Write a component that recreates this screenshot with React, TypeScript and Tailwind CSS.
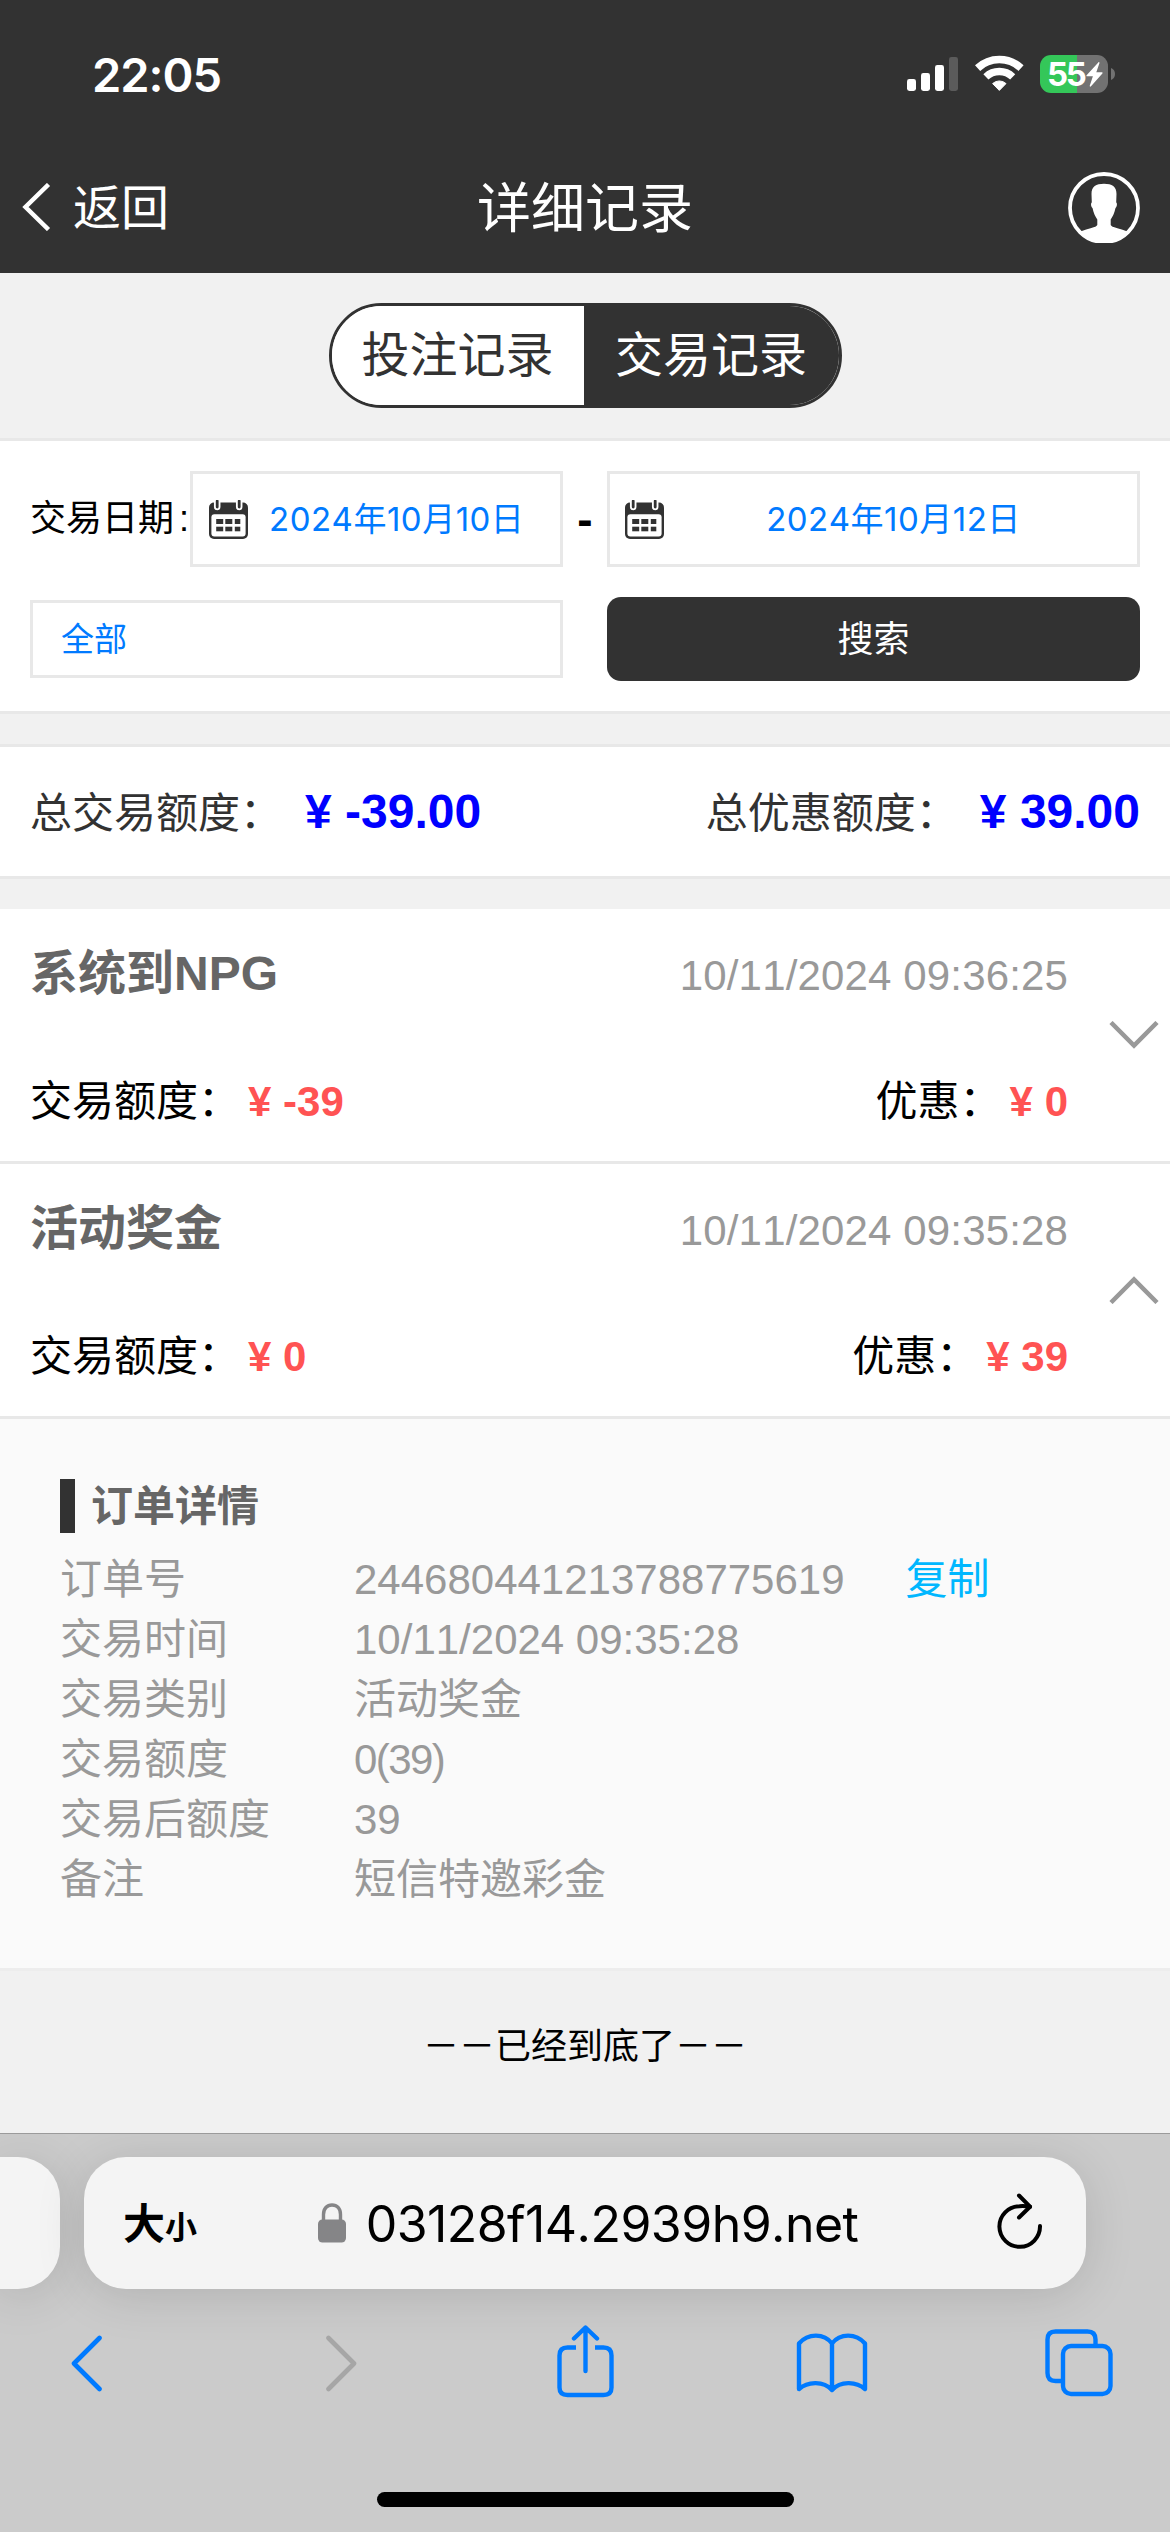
import React, { useState } from 'react';

interface OrderDetail {
  label: string;
  value: string;
  copyable?: boolean;
  tight?: boolean;
}

interface TradeRecord {
  id: string;
  title: string;
  time: string;
  amount: string;
  bonus: string;
  details: OrderDetail[];
}

const records: TradeRecord[] = [
  {
    id: '1',
    title: '系统到NPG',
    time: '10/11/2024 09:36:25',
    amount: '-39',
    bonus: '0',
    details: []
  },
  {
    id: '2',
    title: '活动奖金',
    time: '10/11/2024 09:35:28',
    amount: '0',
    bonus: '39',
    details: [
      { label: '订单号', value: '244680441213788775619', copyable: true },
      { label: '交易时间', value: '10/11/2024 09:35:28' },
      { label: '交易类别', value: '活动奖金' },
      { label: '交易额度', value: '0(39)', tight: true },
      { label: '交易后额度', value: '39' },
      { label: '备注', value: '短信特邀彩金' }
    ]
  }
];

const SignalIcon = () => (
  <svg width="51" height="34" viewBox="0 0 51 34" fill="#fff">
    <rect x="0" y="22" width="9" height="12" rx="2.4" />
    <rect x="14" y="16" width="9" height="18" rx="2.4" />
    <rect x="28" y="8" width="9" height="26" rx="2.4" />
    <rect x="42" y="0" width="9" height="34" rx="2.4" fill="#5b5b5b" />
  </svg>
);

const WifiIcon = () => (
  <svg width="49" height="36" viewBox="0 0 49 36" fill="none" stroke="#fff">
    <path d="M2.6 13.1A31.8 31.8 0 0 1 46 13.1" strokeWidth="7.6" />
    <path d="M10.9 21.9A19.5 19.5 0 0 1 37.7 21.9" strokeWidth="7.4" />
    <path d="M24.3 35.4L17.6 28.6A9.8 9.8 0 0 1 31 28.6Z" fill="#fff" strokeWidth="1" strokeLinejoin="round" />
  </svg>
);

const BatteryIcon = () => (
  <div className="flex items-center">
    <div className="flex h-[38px] w-[68px] items-center overflow-hidden rounded-[11px] bg-[linear-gradient(90deg,#34c759_37px,#727272_37px)] pl-[7px]">
      <span className="font-['Inter',sans-serif] text-[33px] leading-[38px] font-bold tracking-[-2.4px] text-white">55</span>
      <svg className="ml-[2px]" width="17" height="25" viewBox="0 0 17 25" fill="#fff">
        <path d="M12.3 .4L.6 13.2c-.4.6-.2 1.1.5 1.1h5.8L3.8 23.6c-.3 1 .6 1.4 1.2.7L16.4 11.4c.5-.6.2-1.1-.5-1.1h-5.6L13.4 1.2c.3-1-.5-1.4-1.1-.8z" />
      </svg>
    </div>
    <svg className="ml-[3px]" width="4" height="12" viewBox="0 0 4 12" fill="#727272">
      <path d="M0 0c2.600 1 4 3.200 4 6s-1.400 5-4 6z" />
    </svg>
  </div>
);

const AvatarIcon = () => (
  <svg className="mr-[8px]" width="72" height="71" viewBox="0 0 72 71">
    <circle cx="36" cy="36" r="34" fill="none" stroke="#fff" strokeWidth="3.800" />
    <path
      d="M36 11.700C44 11.700 48.600 14.500 48.500 22L48.200 30.500C49.500 31 49 35 47.500 36C46.500 41 44.500 45 42.700 47.500V53C43.500 55.500 52 56.500 59.500 59.500C54 67 46 71 36 71C26 71 18 67 12.500 59.500C20 56.500 28.500 55.500 29.300 53V47.500C27.500 45 25.500 41 24.500 36C23 35 22.500 31 23.800 30.500L23.500 22C23.400 14.500 28 11.700 36 11.700Z"
      fill="#fff"
    />
  </svg>
);

const CalendarIcon = () => (
  <svg className="shrink-0" width="39" height="39" viewBox="0 0 39 39">
    <rect x="0" y="2.500" width="39" height="36.500" rx="5" fill="#323232" />
    <rect x="2.400" y="14.300" width="34.200" height="22.300" rx="3" fill="#fff" />
    <path d="M8.200 0v7M30.200 0v7" stroke="#fff" strokeWidth="6.500" strokeLinecap="round" />
    <path d="M8.200 1v6M30.200 1v6" stroke="#323232" strokeWidth="2.800" strokeLinecap="round" />
    <g fill="#323232">
      <rect x="7.200" y="19" width="7" height="5" />
      <rect x="16.300" y="19" width="7" height="5" />
      <rect x="25.800" y="19" width="5.500" height="5" />
      <rect x="7.200" y="26.700" width="7" height="4.600" />
      <rect x="16.300" y="26.700" width="7" height="4.600" />
      <rect x="25.800" y="26.700" width="5.500" height="4.600" />
    </g>
  </svg>
);

const Header: React.FC = () => (
  <header className="bg-[#323232] text-white">
    <div className="flex h-[141px] items-start justify-between pr-[55px] pl-[92px]">
      <span className="mt-[50px] font-['Inter',sans-serif] text-[47px] leading-[50px] font-semibold tracking-[-1px]">22:05</span>
      <div className="mt-[55px] flex items-start">
        <div className="mt-[2px]">
          <SignalIcon />
        </div>
        <div className="ml-[17px]">
          <WifiIcon />
        </div>
        <div className="ml-[16px]">
          <BatteryIcon />
        </div>
      </div>
    </div>
    <div className="grid h-[132px] grid-cols-[1fr_auto_1fr] items-center px-[22px]">
      <button className="flex items-center">
        <svg width="29" height="48" viewBox="0 0 29 48" fill="none" stroke="#fff" strokeWidth="4.500">
          <path d="M26.500 1.500L3.500 24L26.500 46.500" />
        </svg>
        <span className="ml-[22px] pt-[3px] text-[48px] leading-[60px]">返回</span>
      </button>
      <h1 className="pt-[3px] text-[54px] leading-[64px]">详细记录</h1>
      <div className="flex justify-end">
        <AvatarIcon />
      </div>
    </div>
  </header>
);

const RecordTabs: React.FC = () => (
  <div className="flex h-[168px] justify-center border-b-[3px] border-[#e8e8e8] bg-[#f1f1f1] pt-[30px]">
    <div className="flex h-[105px] w-[513px] overflow-hidden rounded-full border-[3px] border-[#323232] text-[48px] leading-[100px]">
      <button className="w-[252px] bg-white text-[#323232]">投注记录</button>
      <button className="flex-1 bg-[#323232] text-white">交易记录</button>
    </div>
  </div>
);

const SearchForm: React.FC = () => (
  <section className="h-[273px] border-b-[3px] border-[#e8e8e8] bg-white px-[30px] pt-[30px]">
    <div className="flex h-[96px] items-center">
      <label className="w-[160px] text-[36px] whitespace-nowrap text-black">
        交易日期<span className="ml-[5px]">:</span>
      </label>
      <div className="flex h-full w-[373px] items-center border-[3px] border-[#e8e8e8] pl-[16px]">
        <CalendarIcon />
        <span className="ml-[21px] pt-[2px] font-['Inter','Noto_Sans_CJK_SC',sans-serif] text-[33px] tracking-[0.5px] whitespace-nowrap text-[#007aff]">
          2024年10月10日
        </span>
      </div>
      <span className="w-[44px] text-center text-[46px] leading-[60px] font-bold text-black">-</span>
      <div className="flex h-full w-[533px] items-center border-[3px] border-[#e8e8e8] pr-[14px] pl-[15px]">
        <CalendarIcon />
        <span className="flex-1 pt-[2px] text-center font-['Inter','Noto_Sans_CJK_SC',sans-serif] text-[33px] tracking-[0.5px] whitespace-nowrap text-[#007aff]">
          2024年10月12日
        </span>
      </div>
    </div>
    <div className="mt-[30px] flex h-[84px] items-center justify-between">
      <div className="flex h-[78px] w-[533px] items-center border-[3px] border-[#e8e8e8] pt-[2px] pl-[28px] text-[33px] text-[#007aff]">
        全部
      </div>
      <button className="h-full w-[533px] rounded-[14px] bg-[#323232] pt-[2px] text-[36px] text-white">搜索</button>
    </div>
  </section>
);

const Summary: React.FC = () => (
  <section className="mt-[30px] flex h-[135px] items-baseline justify-between border-y-[3px] border-[#e8e8e8] bg-white px-[30px] leading-[130px]">
    <div className="flex items-baseline">
      <span className="text-[42px] text-[#323232]">总交易额度：</span>
      <span className="ml-[23px] text-[48px] font-bold text-[#0000ff]">¥ -39.00</span>
    </div>
    <div className="flex items-baseline">
      <span className="text-[42px] text-[#323232]">总优惠额度：</span>
      <span className="ml-[22px] text-[48px] font-bold text-[#0000ff]">¥ 39.00</span>
    </div>
  </section>
);

const OrderDetails: React.FC<{ details: OrderDetail[] }> = ({ details }) => (
  <div className="border-b-[3px] border-[#ededed] bg-[#fafafa] px-[60px] pt-[60px] pb-[58px]">
    <h3 className="h-[54px] border-l-[15px] border-[#323232] pl-[16px] text-[42px] leading-[56px] font-bold text-[#666]">
      订单详情
    </h3>
    <div className="mt-[17px]">
      {details.map((item) => (
        <div key={item.label} className="flex text-[42px] leading-[60px] text-[#999]">
          <span className="w-[294px]">{item.label}</span>
          <span className={item.tight ? 'tracking-[-1.6px]' : ''}>{item.value}</span>
          {item.copyable && <button className="ml-[61px] text-[#00b7ff]">复制</button>}
        </div>
      ))}
    </div>
  </div>
);

const RecordItem: React.FC<{ record: TradeRecord; open: boolean; onToggle: () => void }> = ({
  record,
  open,
  onToggle
}) => (
  <>
    <div
      className="flex h-[255px] border-b-[3px] border-[#e8e8e8] bg-white pr-[11px] pl-[30px]"
      onClick={onToggle}
    >
      <div className="flex-1 pt-[29px]">
        <div className="flex h-[72px] items-baseline justify-between leading-[72px]">
          <h2 className="text-[48px] font-bold text-[#666]">{record.title}</h2>
          <span className="text-[42px] tracking-[0.15px] text-[#999]">{record.time}</span>
        </div>
        <div className="mt-[62px] flex justify-between text-[42px] leading-[60px] text-black">
          <div>
            交易额度：<span className="ml-[8px] font-bold text-[#ff5353]">¥ {record.amount}</span>
          </div>
          <div>
            优惠：<span className="ml-[8px] font-bold text-[#ff5353]">¥ {record.bonus}</span>
          </div>
        </div>
      </div>
      <svg
        className={open ? 'mt-[112px] ml-[41px] rotate-180' : 'mt-[112px] ml-[41px]'}
        width="50"
        height="28"
        viewBox="0 0 50 28"
        fill="none"
        stroke="#999"
        strokeWidth="4.500"
      >
        <path d="M2 1.500L25 24.500L48 1.500" />
      </svg>
    </div>
    {open && <OrderDetails details={record.details} />}
  </>
);

const BrowserBar: React.FC = () => (
  <footer className="h-[399px] overflow-hidden border-t border-[#9b9b9b] bg-[#cbcbcb] pt-[23px]">
    <div className="flex h-[132px] gap-[24px]">
      <div className="w-[60px] rounded-r-[42px] bg-[#f4f4f4] shadow-[0_6px_50px_rgba(0,0,0,0.13)]" />
      <div className="flex w-[1002px] items-center rounded-[42px] bg-[#f4f4f4] pr-[43px] pl-[39px] text-black shadow-[0_6px_50px_rgba(0,0,0,0.13)]">
        <div className="flex items-baseline pt-[2px] font-bold">
          <span className="text-[42px]">大</span>
          <span className="text-[32px]">小</span>
        </div>
        <div className="flex flex-1 items-center justify-center pr-[18px]">
          <svg width="28" height="40" viewBox="0 0 28 40">
            <path d="M5.500 18V11.500C5.500 5.500 9 2 14 2S22.500 5.500 22.500 11.500V18" fill="none" stroke="#858587" strokeWidth="3.400" />
            <rect x="0" y="16.500" width="28" height="23" rx="4.500" fill="#858587" />
          </svg>
          <span className="ml-[20px] pt-[2px] font-['Inter',sans-serif] text-[50px] leading-[60px] tracking-[-0.55px]">
            03128f14.2939h9.net
          </span>
        </div>
        <svg className="mb-[4px]" width="46" height="56" viewBox="0 0 46 56" fill="none" stroke="#000" strokeWidth="4" strokeLinecap="round" strokeLinejoin="round">
          <path d="M43 33A20.300 20.300 0 1 1 22.500 13.200C26.500 12.800 30 13.200 33 13.800" />
          <path d="M22 2.500L33 13.700L22 24.500" />
        </svg>
      </div>
    </div>
    {/* Toolbar */}
    <div className="mt-[34px] flex h-[80px] items-center text-[#007aff]">
      <svg className="ml-[70px]" width="33" height="57" viewBox="0 0 33 57" fill="none" stroke="currentColor" strokeWidth="4.600" strokeLinecap="round" strokeLinejoin="round">
        <path d="M29.500 3L4 28.500L29.500 54" />
      </svg>
      <svg className="ml-[222px]" width="33" height="57" viewBox="0 0 33 57" fill="none" stroke="#a6a6a6" strokeWidth="4.600" strokeLinecap="round" strokeLinejoin="round">
        <path d="M3.500 3L29 28.500L3.500 54" />
      </svg>
      <svg className="mb-[4px] ml-[199px]" width="57" height="73" viewBox="0 0 57 73" fill="none" stroke="currentColor" strokeWidth="4.400">
        <path d="M19 22.500H10.500Q2.500 22.500 2.500 30.500V62.500Q2.500 70 10.500 70H46.500Q54.500 70 54.500 62.500V30.500Q54.500 22.500 46.500 22.500H38" />
        <path d="M28.500 46V3M17 13.500L28.500 2.500L40 13.500" strokeLinecap="round" strokeLinejoin="round" />
      </svg>
      <svg className="ml-[182px]" width="72" height="60" viewBox="0 0 72 60" fill="none" stroke="currentColor" strokeWidth="4.400" strokeLinecap="round" strokeLinejoin="round">
        <path d="M36 10.500C28 0 12 0 3 10.500V56C11 49 27 47 36 57C45 47 61 49 69 56V10.500C60 0 44 0 36 10.500V57" />
      </svg>
      <svg className="ml-[177px]" width="68" height="68" viewBox="0 0 68 68" fill="none" stroke="currentColor" strokeWidth="4.400">
        <path d="M17 52H10.500Q2.500 52 2.500 44V10.500Q2.500 2.500 10.500 2.500H42.500Q50.500 2.500 50.500 10.500V17" />
        <rect x="18" y="17" width="47.500" height="48" rx="8" />
      </svg>
    </div>
    <div className="mx-auto mt-[89px] h-[15px] w-[417px] rounded-full bg-black" />
  </footer>
);

const App: React.FC = () => {
  const [openId, setOpenId] = useState<string | null>('2');

  return (
    <div className="flex h-[2532px] w-[1170px] flex-col overflow-hidden bg-[#f1f1f1] font-['Liberation_Sans','Noto_Sans_CJK_SC',sans-serif] [font-kerning:none]">
      <Header />
      <RecordTabs />
      <SearchForm />
      <Summary />
      <main className="mt-[30px]">
        {records.map((record) => (
          <RecordItem
            key={record.id}
            record={record}
            open={openId === record.id}
            onToggle={() => setOpenId(openId === record.id ? null : record.id)}
          />
        ))}
      </main>
      <p className="flex-1 text-center text-[36px] leading-[152px] text-black">－－已经到底了－－</p>
      <BrowserBar />
    </div>
  );
};

export default App;
